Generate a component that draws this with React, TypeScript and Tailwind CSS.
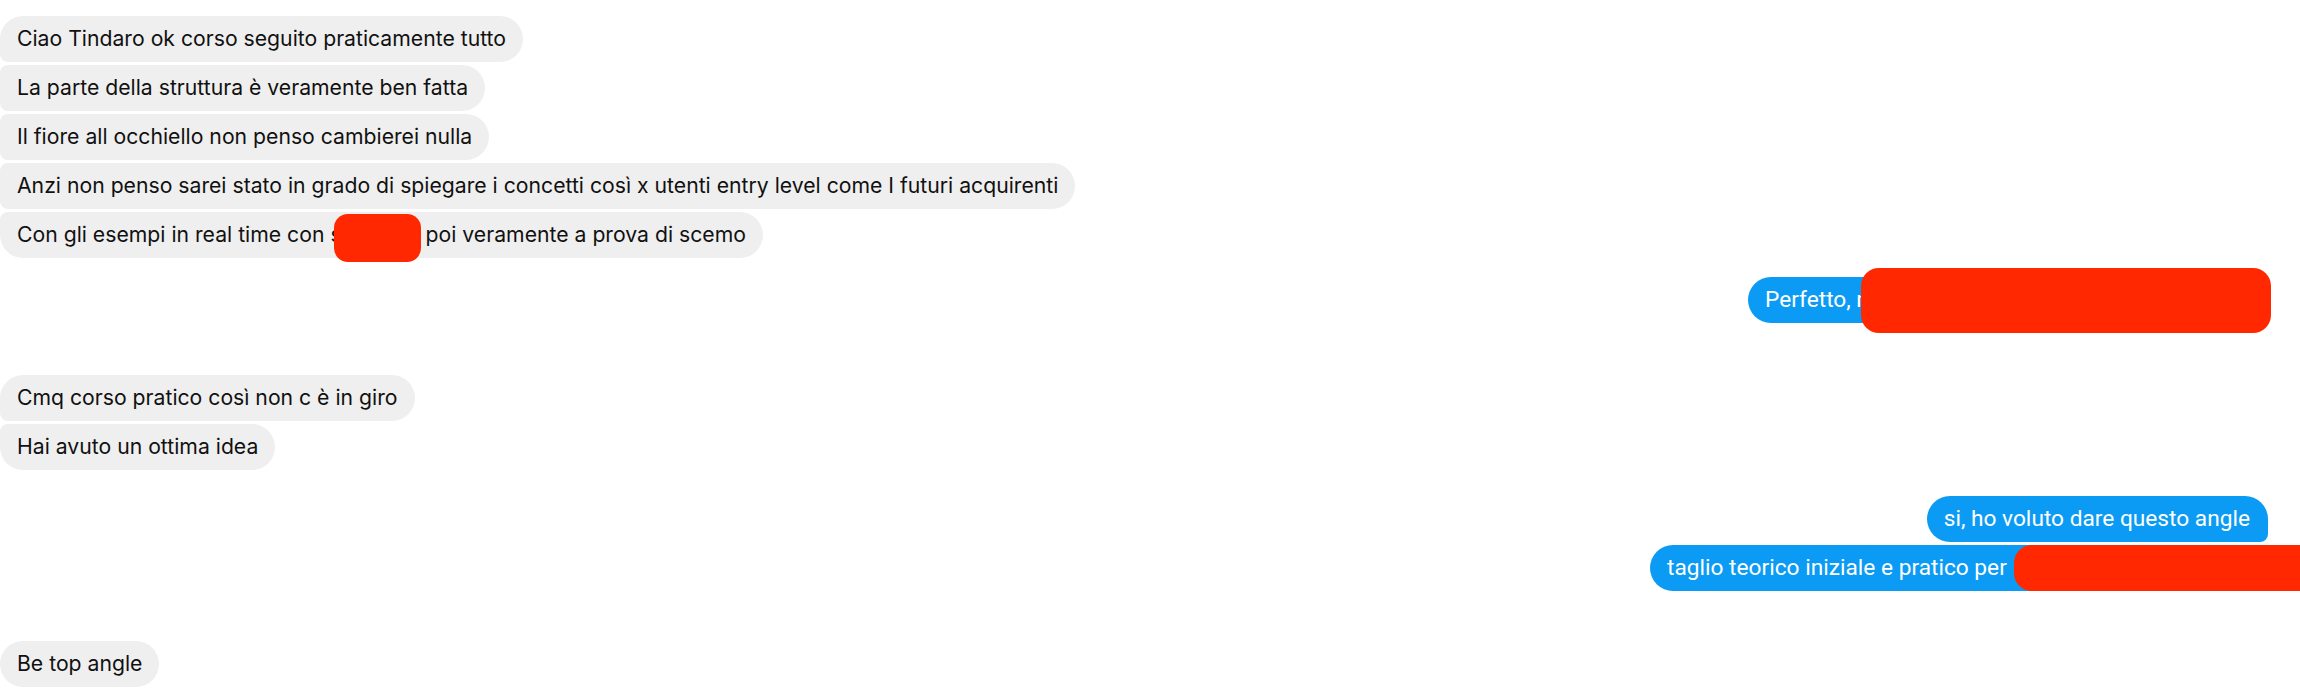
import React from 'react'

const Gray: React.FC<{ children: React.ReactNode; className?: string }> = ({ children, className = '' }) => (
  <div className={`relative flex h-[46px] items-center rounded-[23px] bg-[#efefef] pr-[17px] pl-[17px] font-['Inter',sans-serif] text-[21.2px] whitespace-nowrap text-[#111] ${className}`}>
    {children}
  </div>
)

const Blue: React.FC<{ children: React.ReactNode; className?: string }> = ({ children, className = '' }) => (
  <div className={`relative flex h-[46px] items-center rounded-[23px] bg-[#0b9bf4] pr-[18px] pl-[17px] font-['Roboto',sans-serif] text-[22.7px] whitespace-nowrap text-white ${className}`}>
    {children}
  </div>
)

// redaction blob laid over the bubble text
const Blob: React.FC<{ className: string }> = ({ className }) => (
  <div className={`absolute bg-[#ff2800] ${className}`}></div>
)

export default function App() {
  return (
    <div className="h-[688px] w-[2300px] overflow-hidden bg-white pt-[16px]">
      <div className="flex flex-col items-start gap-[3px]">
        <Gray className="rounded-bl-[8px]">Ciao Tindaro ok corso seguito praticamente tutto</Gray>
        <Gray className="rounded-l-[8px]">La parte della struttura è veramente ben fatta</Gray>
        <Gray className="rounded-l-[8px]">Il fiore all occhiello non penso cambierei nulla</Gray>
        <Gray className="rounded-l-[8px]">Anzi non penso sarei stato in grado di spiegare i concetti così x utenti entry level come I futuri acquirenti</Gray>
        <Gray className="rounded-tl-[8px]">
          Con gli esempi in real time con s<span className="inline-block w-[84px]"></span>poi veramente a prova di scemo
          <Blob className="top-[2px] left-[334px] h-[48px] w-[87px] rounded-[14px]" />
        </Gray>
      </div>

      <div className="mt-[19px] flex flex-col items-end pr-[29px]">
        <Blue className="w-[523px]">
          Perfetto, m
          <Blob className="top-[-9px] left-[113px] h-[65px] w-[410px] rounded-[18px]" />
        </Blue>
      </div>

      <div className="mt-[52px] flex flex-col items-start gap-[3px]">
        <Gray className="rounded-bl-[8px]">Cmq corso pratico così non c è in giro</Gray>
        <Gray className="rounded-tl-[8px]">Hai avuto un ottima idea</Gray>
      </div>

      <div className="mt-[26px] flex flex-col items-end gap-[3px] pr-[32px]">
        <Blue className="rounded-br-[8px]">si, ho voluto dare questo angle</Blue>
        <Blue className="w-[618px] rounded-tr-[8px]">
          taglio teorico iniziale e pratico per
          <Blob className="top-0 left-[364px] h-[46px] w-[400px] rounded-[18px]" />
        </Blue>
      </div>

      <div className="mt-[50px] flex flex-col items-start">
        <Gray>Be top angle</Gray>
      </div>
    </div>
  )
}
